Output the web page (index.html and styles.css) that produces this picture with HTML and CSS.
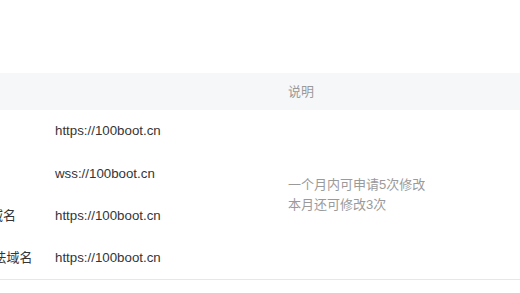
FILE: index.html
```html
<!DOCTYPE html>
<html lang="zh-CN">
<head>
<meta charset="utf-8">
<link rel="stylesheet" href="styles.css">
</head>
<body>
<div class="page">
  <div class="table">
    <div class="head label"></div>
    <div class="head value"></div>
    <div class="head desc">说明</div>

    <div class="cell label r1">request合法域名</div>
    <div class="cell value r1">https://100boot.cn</div>
    <div class="cell label r2">socket合法域名</div>
    <div class="cell value r2">wss://100boot.cn</div>
    <div class="cell label r3">uploadFile合法域名</div>
    <div class="cell value r3">https://100boot.cn</div>
    <div class="cell label r4">downloadFile合法域名</div>
    <div class="cell value r4">https://100boot.cn</div>
    <div class="cell note">一个月内可申请5次修改<br>本月还可修改3次</div>
  </div>
</div>
</body>
</html>
```

FILE: styles.css
```css
html, body {
  margin: 0;
  padding: 0;
  background: #ffffff;
}

body {
  font-family: "Liberation Sans", "Noto Sans CJK SC", sans-serif;
  font-size: 13px;
  color: #353535;
  overflow: hidden;
}

.page {
  padding-top: 73px;
  width: 616px;
  margin-left: -96px;
}

.table {
  display: grid;
  grid-template-columns: 151px 233px 1fr;
  grid-template-rows: 37px 42px 43px 42px 42px;
  border-bottom: 1px solid #e7e7e7;
}

.head {
  background: #f6f7f9;
  color: #9a9a9a;
  display: flex;
  align-items: center;
  line-height: 20px;
}

.cell {
  display: flex;
  align-items: center;
  line-height: 20px;
  white-space: nowrap;
}

.label { grid-column: 1; }
.value {
  grid-column: 2;
  font-size: 13.3px;
}

.r1 { grid-row: 2; }
.r2 { grid-row: 3; }
.r3 { grid-row: 4; }
.r4 { grid-row: 5; }

.note {
  grid-column: 3;
  grid-row: 2 / 6;
  color: #9a9a9a;
  padding-top: 1px;
}
```
